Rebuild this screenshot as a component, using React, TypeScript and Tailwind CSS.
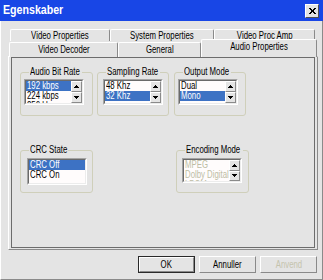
import React from 'react';

const ui = "font-['Liberation_Sans',Arial,sans-serif]";

// the reference text is horizontally squeezed, so squeeze the glyphs the same way
function Txt({ children, center }: { children: React.ReactNode; center?: boolean }) {
  return (
    <span className={`inline-block whitespace-nowrap scale-x-[0.78] ${center ? 'origin-center' : 'origin-left'}`}>
      {children}
    </span>
  );
}

function Arrow({ down }: { down?: boolean }) {
  return (
    <svg width="5" height="3" viewBox="0 0 5 3" shapeRendering="crispEdges">
      <path
        d={down ? 'M0 0h5v1h-1v1h-1v1h-1v-1h-1v-1h-1z' : 'M2 0h1v1h1v1h1v1h-5v-1h1v-1h1z'}
        fill="#000"
      />
    </svg>
  );
}

function SpinButton({ down }: { down?: boolean }) {
  return (
    <div className="flex flex-1 items-center justify-center bg-[#e4e4e4] border border-t-white border-l-white border-r-[#8a8a8a] border-b-[#8a8a8a]">
      <Arrow down={down} />
    </div>
  );
}

type ListProps = {
  items: string[];
  sel?: number;
  spin?: boolean;
  disabled?: boolean;
  h?: string;
};

function ListBox({ items, sel, spin, disabled, h = 'h-[26px]' }: ListProps) {
  return (
    <div className={`flex w-[60px] ${h} border border-t-[#a4a4a4] border-l-[#a4a4a4] border-r-white border-b-white`}>
      <div className="flex flex-1 min-w-0 bg-[#fffcfc] border border-t-[#6a6a6a] border-l-[#6a6a6a] border-r-[#ececec] border-b-[#ececec] overflow-hidden">
        <div className="flex-1 min-w-0 overflow-hidden">
          {items.map((t, i) => (
            <div
              key={t}
              className={`h-[10px] leading-[10px] pl-[1px] whitespace-nowrap text-[10px] ${
                i === sel ? 'bg-[#3d72c4] text-white' : disabled ? 'text-[#bdbca4]' : 'text-black'
              }`}
            >
              <Txt>{t}</Txt>
            </div>
          ))}
        </div>
        {spin && (
          <div className="flex flex-col w-[11px] shrink-0">
            <SpinButton />
            <SpinButton down />
          </div>
        )}
      </div>
    </div>
  );
}

function Group({
  title,
  labelW,
  className,
  children,
}: {
  title: string;
  labelW: string;
  className: string;
  children: React.ReactNode;
}) {
  return (
    <fieldset className={`border border-[#cfcfba] rounded-[3px] px-[3px] pt-[2px] ${className}`}>
      <legend className={`ml-[5px] px-[1px] text-[10px] leading-[10px] text-black ${labelW}`}>
        <Txt>{title}</Txt>
      </legend>
      {children}
    </fieldset>
  );
}

function Tab({ label, className }: { label: string; className: string }) {
  return (
    <div
      className={`flex justify-center bg-[#e4e4e4] border-t border-l border-r border-t-white border-l-white border-r-[#8a8a8a] rounded-t-[2px] text-[10px] text-black ${className}`}
    >
      <Txt center>{label}</Txt>
    </div>
  );
}

function Button({ label, primary, disabled }: { label: string; primary?: boolean; disabled?: boolean }) {
  return (
    <div className={`w-[57px] h-[17px] ${primary ? 'border border-[#2a2a2a]' : ''}`}>
      <div
        className={`flex items-center justify-center h-full bg-[#e4e4e4] border border-t-white border-l-white border-r-[#8a8a8a] border-b-[#8a8a8a] text-[10px] ${
          disabled ? 'text-[#c4c3ad]' : 'text-black'
        }`}
      >
        <Txt center>{label}</Txt>
      </div>
    </div>
  );
}

export default function App() {
  return (
    <div className={`w-[323px] h-[280px] bg-[#e4e4e4] flex flex-col ${ui}`}>
      {/* Title bar */}
      <div className="h-[21px] bg-[#1846e6] flex items-center justify-between pl-[3px] pr-[4px] shrink-0">
        <span className="inline-block text-white font-bold text-[12.5px] leading-none scale-x-[0.85] origin-left">
          Egenskaber
        </span>
        <div className="w-[14px] h-[14px] bg-[#e4e4e4] border border-t-white border-l-white border-r-[#505050] border-b-[#505050] flex items-center justify-center">
          <svg width="7" height="6" viewBox="0 0 7 6" shapeRendering="crispEdges">
            <path d="M0 0h2l1.5 2L5 0h2L4.5 3 7 6H5L3.5 4 2 6H0l2.5-3z" fill="#000" />
          </svg>
        </div>
      </div>

      {/* Body */}
      <div className="flex-1 flex flex-col pl-[7px] pt-[8px] border-l border-l-white border-r border-r-[#8a8a8a] border-b border-b-[#8a8a8a]">
        {/* Tabs */}
        <div className="flex ml-[2px]">
          <Tab label="Video Properties" className="w-[100px] h-[12px] leading-[11px]" />
          <Tab label="System Properties" className="w-[104px] h-[12px] leading-[11px]" />
          <Tab label="Video Proc Amp" className="w-[101px] h-[12px] leading-[11px]" />
        </div>
        <div className="flex ml-[1px] items-end relative z-10 -mb-[1px]">
          <Tab label="Video Decoder" className="w-[109px] h-[15px] leading-[14px]" />
          <Tab label="General" className="w-[83px] h-[15px] leading-[14px]" />
          <Tab label="Audio Properties" className="w-[116px] h-[18px] leading-[14px] -mt-[2px]" />
        </div>

        {/* Panel */}
        <div className="w-[310px] h-[194px] border border-t-white border-l-white border-r-[#8a8a8a] border-b-[#8a8a8a] px-[2px] pb-[1px] flex">
          <div className="flex-1 border border-[#6c6c6c] pl-[8px] pt-[9px]">
            <div className="flex">
              <Group title="Audio Bit Rate" labelW="w-[53px]" className="w-[73px] h-[49px]">
                <ListBox items={['192 kbps', '224 kbps', '256 kbps']} sel={0} spin />
              </Group>
              <Group title="Sampling Rate" labelW="w-[54px]" className="w-[72px] h-[49px] ml-[4px]">
                <div className="pl-[2px]">
                  <ListBox items={['48 Khz', '32 Khz']} sel={1} spin />
                </div>
              </Group>
              <Group title="Output Mode" labelW="w-[48px]" className="w-[72px] h-[49px] ml-[5px]">
                <ListBox items={['Dual', 'Mono']} sel={1} spin />
              </Group>
            </div>
            <div className="flex mt-[29px]">
              <Group title="CRC State" labelW="w-[39px]" className="w-[73px] h-[48px]">
                <div className="pl-[3px] pt-[1px]">
                  <ListBox items={['CRC Off', 'CRC On']} sel={0} h="h-[27px]" />
                </div>
              </Group>
              <Group title="Encoding Mode" labelW="w-[58px]" className="w-[73px] h-[48px] ml-[83px]">
                <div className="pl-[2px] pt-[1px]">
                  <ListBox items={['MPEG', 'Dolby Digital', 'LPCM']} spin disabled h="h-[25px]" />
                </div>
              </Group>
            </div>
          </div>
        </div>

        {/* Buttons */}
        <div className="flex justify-end gap-[4px] mt-[6px] pr-[5px]">
          <Button label="OK" primary />
          <Button label="Annuller" />
          <Button label="Anvend" disabled />
        </div>
      </div>
    </div>
  );
}
